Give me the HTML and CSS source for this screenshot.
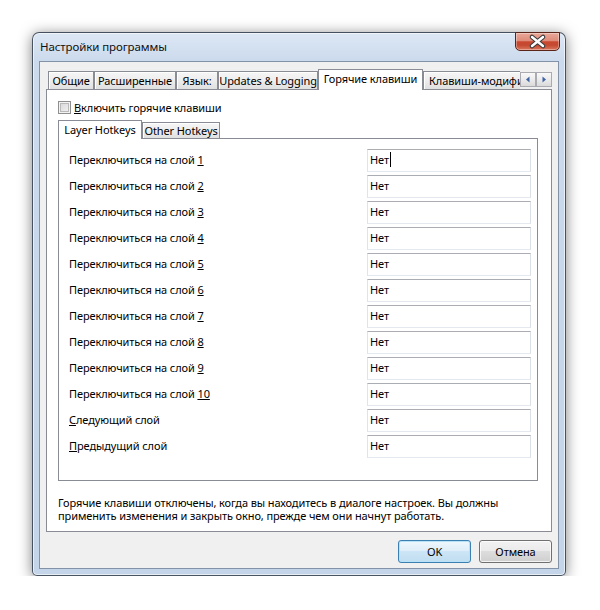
FILE: index.html
```html
<!DOCTYPE html>
<html lang="ru">
<head>
<meta charset="utf-8">
<title>Настройки программы</title>
<link rel="stylesheet" href="styles.css">
</head>
<body>
<div class="window">
  <div class="titlebar">
    <span class="title">Настройки программы</span>
    <div class="close">
      <svg width="45" height="19" viewBox="0 0 45 19">
        <path d="M17 5 L28 14 M28 5 L17 14" stroke="#3b3b3b" stroke-width="4.6" stroke-linecap="round" fill="none"/>
        <path d="M17 5 L28 14 M28 5 L17 14" stroke="#ffffff" stroke-width="2.4" stroke-linecap="round" fill="none"/>
      </svg>
    </div>
  </div>
  <div class="client">
    <div class="tabstrip">
      <div class="tabs">
        <div class="tab w-general">Общие</div>
        <div class="tab w-ext">Расширенные</div>
        <div class="tab w-lang">Язык:</div>
        <div class="tab w-upd">Updates &amp; Logging</div>
        <div class="tab active w-hot">Горячие клавиши</div>
        <div class="tab w-mod">Клавиши-модификаторы</div>
      </div>
      <div class="scroller">
        <div class="sbtn"><svg width="6" height="7" viewBox="0 0 6 7"><path d="M4.5 0.5 L1 3.5 L4.5 6.5 Z" fill="#3f63a3"/></svg></div>
        <div class="sbtn"><svg width="6" height="7" viewBox="0 0 6 7"><path d="M1.5 0.5 L5 3.5 L1.5 6.5 Z" fill="#3f63a3"/></svg></div>
      </div>
    </div>
    <div class="panel">
      <div class="check"><span class="box"></span><span><u>В</u>ключить горячие клавиши</span></div>
      <div class="subtabs">
        <div class="stab active">Layer Hotkeys</div>
        <div class="stab">Other Hotkeys</div>
      </div>
      <div class="subpanel">
        <div class="grid">
          <span class="lbl">Переключиться на слой <u>1</u></span><div class="field">Нет<span class="caret"></span></div>
          <span class="lbl">Переключиться на слой <u>2</u></span><div class="field">Нет</div>
          <span class="lbl">Переключиться на слой <u>3</u></span><div class="field">Нет</div>
          <span class="lbl">Переключиться на слой <u>4</u></span><div class="field">Нет</div>
          <span class="lbl">Переключиться на слой <u>5</u></span><div class="field">Нет</div>
          <span class="lbl">Переключиться на слой <u>6</u></span><div class="field">Нет</div>
          <span class="lbl">Переключиться на слой <u>7</u></span><div class="field">Нет</div>
          <span class="lbl">Переключиться на слой <u>8</u></span><div class="field">Нет</div>
          <span class="lbl">Переключиться на слой <u>9</u></span><div class="field">Нет</div>
          <span class="lbl">Переключиться на слой <u>10</u></span><div class="field">Нет</div>
          <span class="lbl"><u>С</u>ледующий слой</span><div class="field">Нет</div>
          <span class="lbl"><u>П</u>редыдущий слой</span><div class="field">Нет</div>
        </div>
      </div>
      <p class="note">Горячие клавиши отключены, когда вы находитесь в диалоге настроек. Вы должны<br>применить изменения и закрыть окно, прежде чем они начнут работать.</p>
    </div>
    <div class="buttons">
      <button class="btn default">OK</button>
      <button class="btn">Отмена</button>
    </div>
  </div>
</div>
</body>
</html>
```
FILE: styles.css
```css
html, body {
  margin: 0;
  background: #ffffff;
}
body {
  font-family: "Noto Sans", "Segoe UI", "Open Sans", sans-serif;
  font-size: 11px;
  letter-spacing: -0.1px;
  color: #000;
}
.window {
  position: relative;
  margin: 32px 0 0 32px;
  width: 534px;
  height: 544px;
  box-sizing: border-box;
  border: 1px solid rgba(38, 48, 62, 0.8);
  border-radius: 7px 7px 5px 5px;
  background: linear-gradient(#dde8f5, #cbdaec 28px, #c4d5e9);
  box-shadow: 0 2px 14px rgba(0, 0, 0, 0.5), inset 0 0 0 1px rgba(255, 255, 255, 0.6);
  display: flex;
  flex-direction: column;
}
.titlebar {
  height: 28px;
  display: flex;
  align-items: flex-start;
  padding: 0 5px 0 7px;
  flex: none;
}
.title {
  line-height: 28px;
  font-size: 11.5px;
  color: #111;
}
.close {
  margin-left: auto;
  margin-top: -1px;
  width: 45px;
  height: 19px;
  box-sizing: border-box;
  border: 1px solid #5b2419;
  border-radius: 0 0 5px 5px;
  background: linear-gradient(#e9a899 0%, #df8c7a 45%, #c8472f 52%, #c54a32 72%, #d9785f 100%);
  box-shadow: inset 0 0 0 1px rgba(255, 255, 255, 0.35);
  display: flex;
  align-items: center;
  justify-content: center;
  overflow: hidden;
}
.close svg {
  flex: none;
}
.client {
  flex: 1;
  margin: 0 6px 6px 6px;
  border: 1px solid #8392a6;
  background: #f0f0f0;
  padding: 7px 6px 5px 6px;
  display: flex;
  flex-direction: column;
}
.tabstrip {
  display: flex;
  height: 21px;
  margin-bottom: -1px;
  position: relative;
  z-index: 1;
  flex: none;
}
.tabs {
  flex: 1;
  display: flex;
  align-items: flex-start;
  overflow: hidden;
  padding-left: 2px;
}
.tab {
  flex: none;
  box-sizing: border-box;
  height: 18px;
  margin-top: 2px;
  border: 1px solid #898c95;
  border-bottom: none;
  background: linear-gradient(#f6f6f6, #ededed 50%, #e0e0e0);
  box-shadow: inset 1px 1px 0 #ffffff;
  white-space: nowrap;
  overflow: hidden;
  text-align: center;
  line-height: 17px;
}
.tab.active {
  height: 21px;
  margin-top: 0;
  background: #ffffff;
  box-shadow: none;
  line-height: 18px;
}
.w-general { width: 46px; }
.w-ext { width: 82px; }
.w-lang { width: 42px; }
.w-upd { width: 100px; }
.w-hot { width: 105px; }
.w-mod { width: 130px; text-align: left; padding-left: 5px; }
.scroller {
  display: flex;
  margin-top: 3px;
  flex: none;
}
.sbtn {
  width: 16px;
  height: 15px;
  box-sizing: border-box;
  border: 1px solid #a9abb0;
  background: linear-gradient(#f9f9f9, #ebebeb 50%, #dadada);
  display: flex;
  align-items: center;
  justify-content: center;
}
.panel {
  flex: none;
  height: 443px;
  box-sizing: border-box;
  border: 1px solid #898c95;
  background: #ffffff;
  padding: 11px 0 0 11px;
}
.check {
  display: flex;
  align-items: center;
  height: 13px;
  gap: 3px;
}
.box {
  width: 13px;
  height: 13px;
  box-sizing: border-box;
  border: 1px solid #8e8f8f;
  background: linear-gradient(135deg, #d6d6d6, #f4f4f4);
  box-shadow: inset 0 0 0 1px #f3f3f3, inset 0 0 0 2px #b9b9b9;
}
.subtabs {
  display: flex;
  align-items: flex-start;
  height: 19px;
  margin-top: 6px;
  margin-bottom: -1px;
  position: relative;
  z-index: 1;
}
.stab {
  box-sizing: border-box;
  width: 78px;
  height: 16px;
  margin-top: 2px;
  border: 1px solid #898c95;
  border-bottom: none;
  background: linear-gradient(#f6f6f6, #ededed 50%, #e0e0e0);
  box-shadow: inset 1px 1px 0 #ffffff;
  text-align: center;
  line-height: 15px;
  white-space: nowrap;
}
.stab.active {
  width: 84px;
  height: 19px;
  margin-top: 0;
  background: #ffffff;
  box-shadow: none;
  line-height: 17px;
}
.subpanel {
  width: 480px;
  height: 343px;
  box-sizing: border-box;
  border: 1px solid #898c95;
  background: #ffffff;
  padding: 10px 0 0 10px;
}
.grid {
  display: grid;
  grid-template-columns: 298px 164px;
  grid-auto-rows: 23px;
  row-gap: 3px;
  align-items: center;
}
.lbl {
  white-space: nowrap;
  padding-bottom: 3px;
}
.field {
  height: 23px;
  box-sizing: border-box;
  border: 1px solid;
  border-color: #abadb3 #dbdfe6 #e3e9ef #e2e3ea;
  padding: 0 2px 3px 2px;
  display: flex;
  align-items: center;
}
.caret {
  display: inline-block;
  width: 1px;
  height: 15px;
  background: #000;
  margin-left: 1px;
}
.note {
  margin: 15px 0 0 0;
  line-height: 13px;
  white-space: nowrap;
}
.buttons {
  display: flex;
  justify-content: flex-end;
  gap: 8px;
  margin-top: 8px;
}
.btn {
  width: 73px;
  height: 23px;
  box-sizing: border-box;
  border: 1px solid #707070;
  border-radius: 3px;
  background: linear-gradient(#f2f2f2, #ebebeb 45%, #dddddd 50%, #cfcfcf);
  box-shadow: inset 0 0 0 1px rgba(255, 255, 255, 0.75);
  font: inherit;
  letter-spacing: inherit;
  color: #000;
  padding: 0;
}
.btn.default {
  border-color: #3c7fb1;
  background: linear-gradient(#eef7fd, #dfeef9 45%, #cde5f6 50%, #c0ddf1);
  box-shadow: inset 0 0 0 1px #b8e2f8;
}
```
